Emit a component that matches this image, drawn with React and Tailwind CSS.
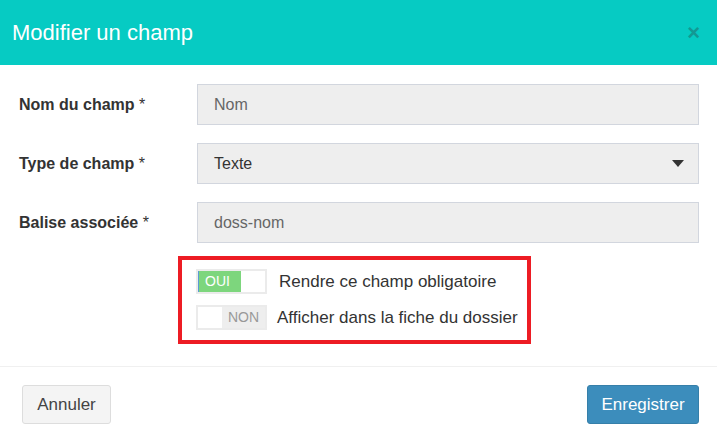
import React from "react";

const font = { fontFamily: '"Liberation Sans", Arial, sans-serif' };

const Field = ({ label, children }) => (
  <div className="flex items-center">
    <label className="w-[179px] shrink-0 pl-[1px] text-[16px] text-[#333]">
      <span className="font-bold">{label}</span> *
    </label>
    {children}
  </div>
);

const Toggle = ({ on }) => (
  <div className="flex h-[25px] w-[71px] border-2 border-[#ebebeb] bg-white">
    {on ? (
      <>
        <span className="flex w-[43px] items-center border-l border-[#5b9bd5] bg-[#7dd67d] pl-[6px] text-[14px] text-white">OUI</span>
        <span className="flex-1 bg-white" />
      </>
    ) : (
      <>
        <span className="w-[24px] bg-white" />
        <span className="flex flex-1 items-center justify-center bg-[#eeeeee] text-[14px] text-[#999]">NON</span>
      </>
    )}
  </div>
);

export default function App() {
  return (
    <div className="h-[448px] w-[717px] bg-white" style={font}>
      {/* header */}
      <div className="flex h-[65px] items-center justify-between bg-[#06cbc3] pl-[12px] pr-[17px]">
        <h1 className="text-[22px] text-white">Modifier un champ</h1>
        <span className="text-[22px] font-bold leading-none text-[#139893]">×</span>
      </div>

      {/* body */}
      <div className="flex flex-col gap-[18px] px-[18px] pt-[19px]">
        <Field label="Nom du champ">
          <div className="flex h-[41px] flex-1 items-center border border-[#d2d6de] bg-[#eeeeee] px-[16px] text-[16px] text-[#666]">Nom</div>
        </Field>
        <Field label="Type de champ">
          <div className="flex h-[41px] flex-1 items-center justify-between border border-[#d2d6de] bg-[#eeeeee] pl-[16px] pr-[14px] text-[16px] text-[#333]">
            <span>Texte</span>
            <svg width="12" height="7" viewBox="0 0 12 7"><path d="M0 0h12L6 7z" fill="#333" /></svg>
          </div>
        </Field>
        <Field label="Balise associée">
          <div className="flex h-[41px] flex-1 items-center border border-[#d2d6de] bg-[#eeeeee] px-[16px] text-[16px] text-[#666]">doss-nom</div>
        </Field>
      </div>

      <div className="pl-[178px] pt-[13px]">
        <div className="inline-flex w-[353px] flex-col gap-[10px] border-4 border-[#ed1c24] pb-[10px] pl-[14px] pt-[9px]">
          <div className="flex items-center gap-[12px]">
            <Toggle on />
            <span className="text-[17px] text-[#333]">Rendre ce champ obligatoire</span>
          </div>
          <div className="flex items-center gap-[10px]">
            <Toggle />
            <span className="text-[17px] text-[#333]">Afficher dans la fiche du dossier</span>
          </div>
        </div>
      </div>

      {/* footer */}
      <div className="mt-[22px] flex items-center justify-between border-t border-[#f0f0f0] pb-[23px] pl-[22px] pr-[18px] pt-[18px]">
        <button className="h-[39px] w-[89px] rounded-[3px] border border-[#ddd] bg-[#f4f4f4] text-[17px] text-[#444]">Annuler</button>
        <button className="h-[39px] w-[112px] rounded-[3px] border border-[#367fa9] bg-[#3c8dbc] text-[17px] text-white">Enregistrer</button>
      </div>
    </div>
  );
}
